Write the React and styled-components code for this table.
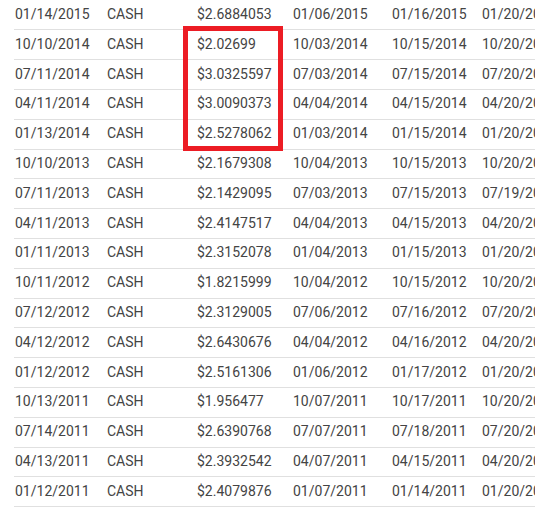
import React from 'react';
import styled, { createGlobalStyle } from 'styled-components';

// Dividend history rows: ex-date, type, amount, record, pay, ...
const rows = [
  ['01/14/2015', 'CASH', '$2.6884053', '01/06/2015', '01/16/2015', '01/20/2015'],
  ['10/10/2014', 'CASH', '$2.02699', '10/03/2014', '10/15/2014', '10/20/2014'],
  ['07/11/2014', 'CASH', '$3.0325597', '07/03/2014', '07/15/2014', '07/20/2014'],
  ['04/11/2014', 'CASH', '$3.0090373', '04/04/2014', '04/15/2014', '04/20/2014'],
  ['01/13/2014', 'CASH', '$2.5278062', '01/03/2014', '01/15/2014', '01/20/2014'],
  ['10/10/2013', 'CASH', '$2.1679308', '10/04/2013', '10/15/2013', '10/20/2013'],
  ['07/11/2013', 'CASH', '$2.1429095', '07/03/2013', '07/15/2013', '07/19/2013'],
  ['04/11/2013', 'CASH', '$2.4147517', '04/04/2013', '04/15/2013', '04/20/2013'],
  ['01/11/2013', 'CASH', '$2.3152078', '01/04/2013', '01/15/2013', '01/20/2013'],
  ['10/11/2012', 'CASH', '$1.8215999', '10/04/2012', '10/15/2012', '10/20/2012'],
  ['07/12/2012', 'CASH', '$2.3129005', '07/06/2012', '07/16/2012', '07/20/2012'],
  ['04/12/2012', 'CASH', '$2.6430676', '04/04/2012', '04/16/2012', '04/20/2012'],
  ['01/12/2012', 'CASH', '$2.5161306', '01/06/2012', '01/17/2012', '01/20/2012'],
  ['10/13/2011', 'CASH', '$1.956477', '10/07/2011', '10/17/2011', '10/20/2011'],
  ['07/14/2011', 'CASH', '$2.6390768', '07/07/2011', '07/18/2011', '07/20/2011'],
  ['04/13/2011', 'CASH', '$2.3932542', '04/07/2011', '04/15/2011', '04/20/2011'],
  ['01/12/2011', 'CASH', '$2.4079876', '01/07/2011', '01/14/2011', '01/20/2011'],
];

const GlobalStyle = createGlobalStyle`
  body {
    margin: 0;
    padding: 0;
    background: #fff;
    font-family: Roboto, "Noto Sans", sans-serif;
  }
`;

const App = () => (
  <>
    <GlobalStyle />
    <Page>
      <Table>
        {rows.map((r, i) => (
          <Row key={i}>
            {r.map((c, j) => (
              <Cell key={j}>{c}</Cell>
            ))}
          </Row>
        ))}
      </Table>
      <Highlight />
    </Page>
  </>
);

const Page = styled.div`
  position: relative;
  width: 547px;
  height: 509px;
  overflow: hidden;
  padding: 0.7px 0 0 14px;
  box-sizing: border-box;
`;

const Table = styled.div`
  width: 521px;
  overflow: hidden;
`;

const Row = styled.div`
  display: grid;
  grid-template-columns: 92px 90px 96px 99px 90px 120px;
  align-items: center;
  height: 29.8px;
  box-sizing: border-box;
  padding-bottom: 2px;
  border-bottom: 1px solid #e0e0e0;
  white-space: nowrap;
`;

const Cell = styled.div`
  font-size: 14px;
  color: #444;
  padding-left: 1px;
`;

const Highlight = styled.div`
  position: absolute;
  left: 183px;
  top: 26px;
  width: 100px;
  height: 125px;
  box-sizing: border-box;
  border: 5px solid #ec1c24;
`;

export default App;
